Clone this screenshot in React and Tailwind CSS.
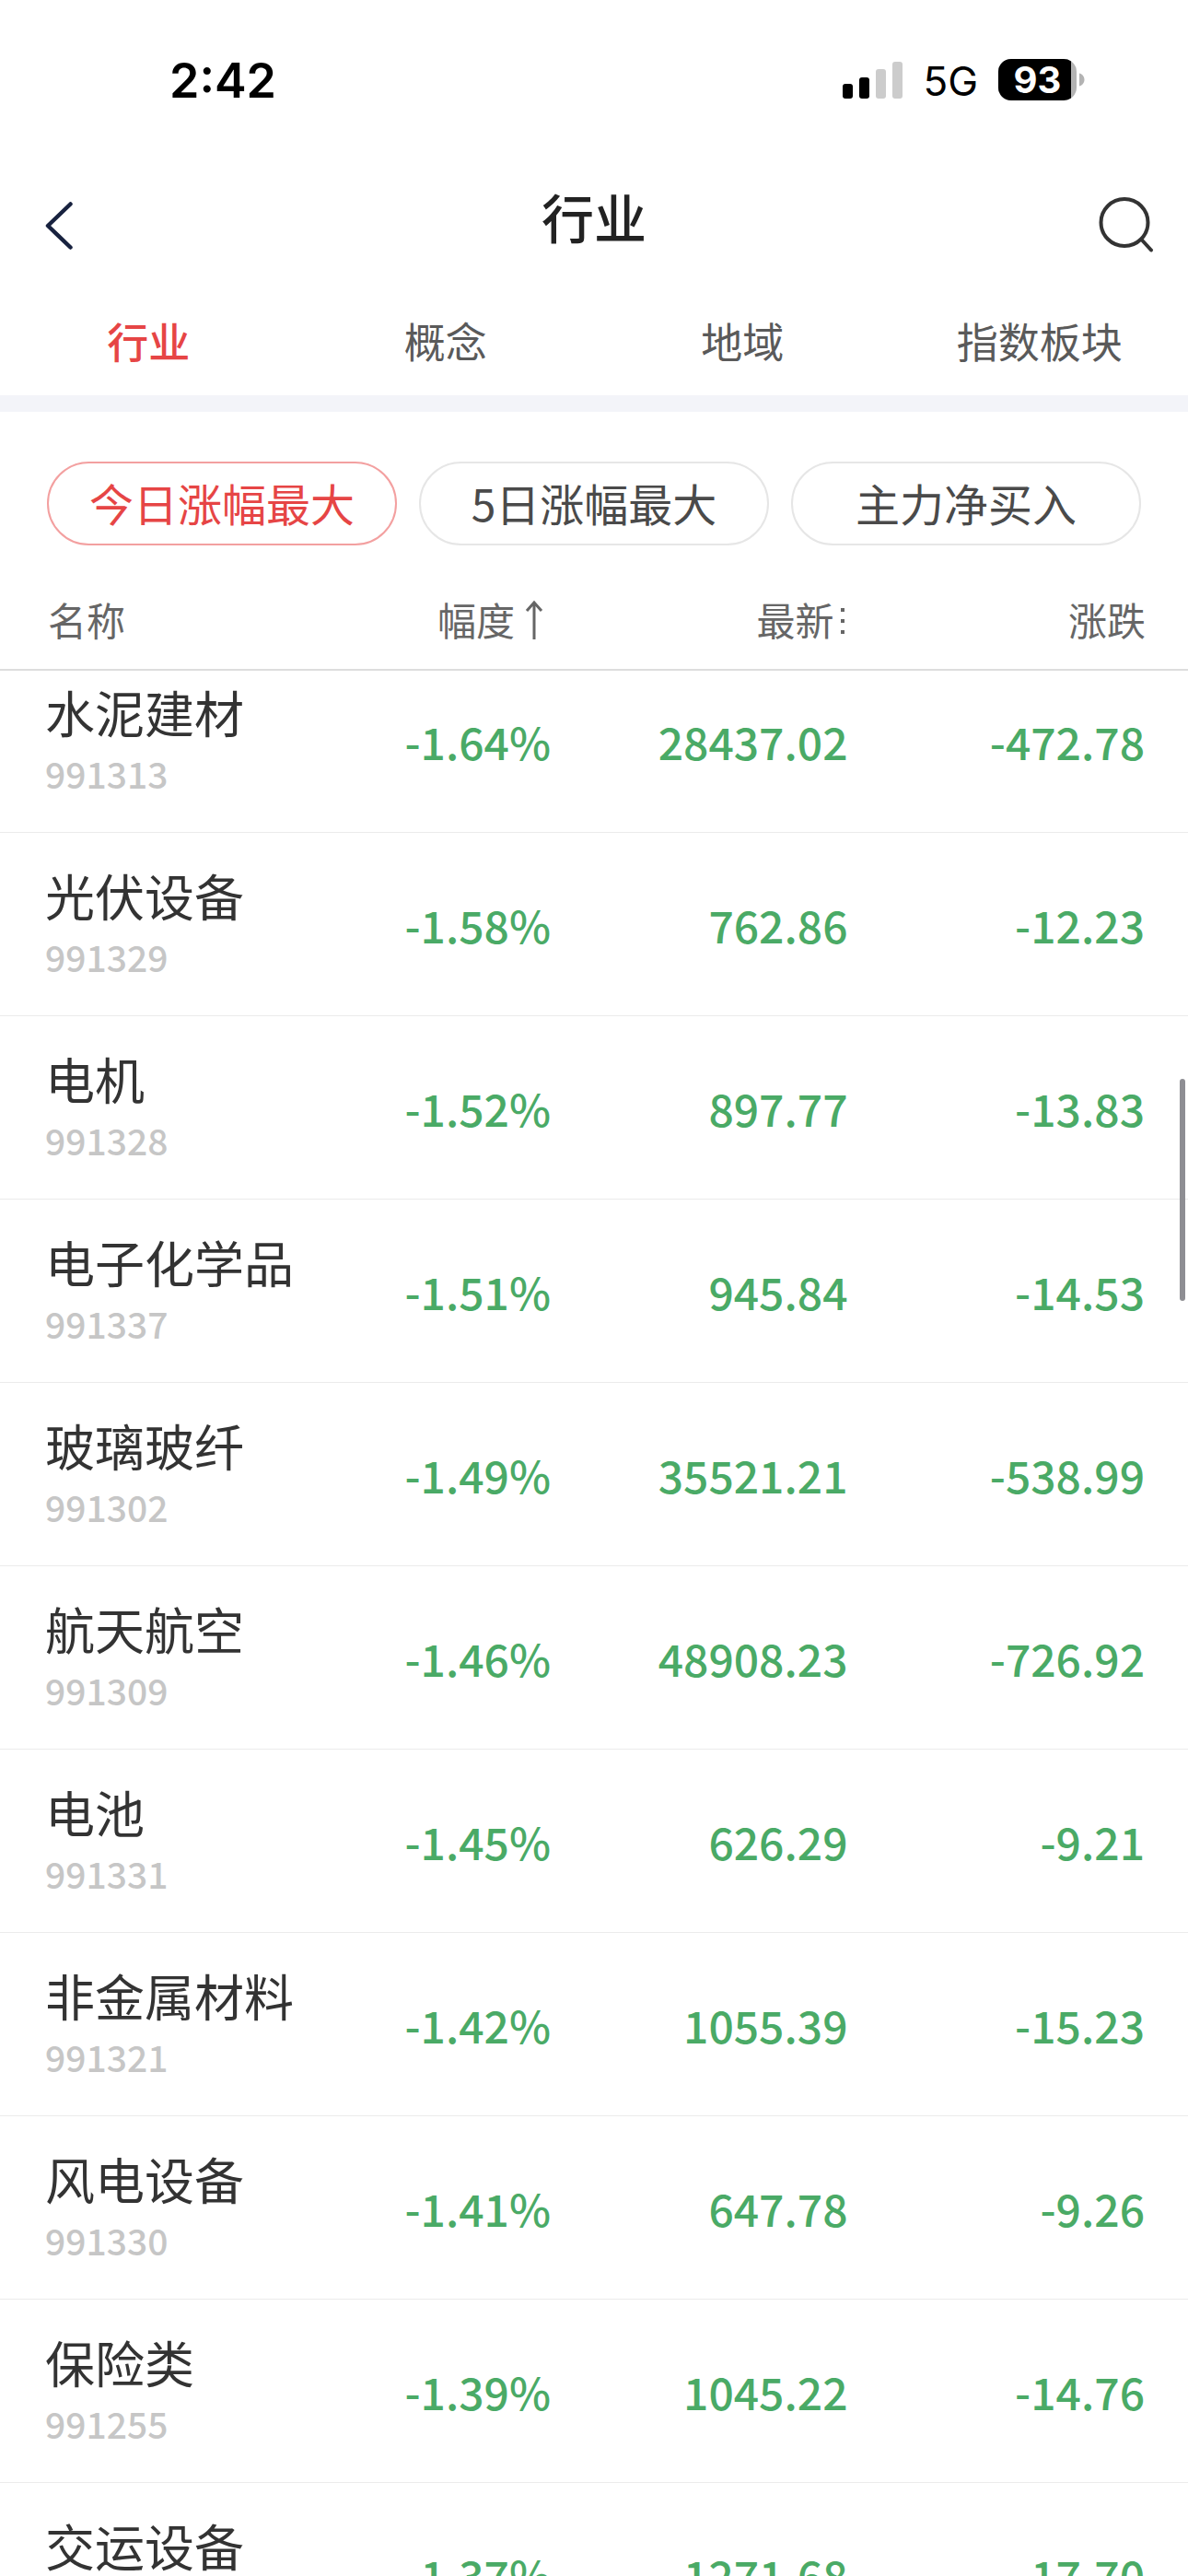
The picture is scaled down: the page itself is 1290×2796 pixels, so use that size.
import { useLayoutEffect, useRef, useState } from 'react';

const tabs = ['行业', '概念', '地域', '指数板块'];
const filters = ['今日涨幅最大', '5日涨幅最大', '主力净买入'];

const sectors = [
  { name: '水泥建材', code: '991313', percent: '-1.64%', price: '28437.02', change: '-472.78' },
  { name: '光伏设备', code: '991329', percent: '-1.58%', price: '762.86', change: '-12.23' },
  { name: '电机', code: '991328', percent: '-1.52%', price: '897.77', change: '-13.83' },
  { name: '电子化学品', code: '991337', percent: '-1.51%', price: '945.84', change: '-14.53' },
  { name: '玻璃玻纤', code: '991302', percent: '-1.49%', price: '35521.21', change: '-538.99' },
  { name: '航天航空', code: '991309', percent: '-1.46%', price: '48908.23', change: '-726.92' },
  { name: '电池', code: '991331', percent: '-1.45%', price: '626.29', change: '-9.21' },
  { name: '非金属材料', code: '991321', percent: '-1.42%', price: '1055.39', change: '-15.23' },
  { name: '风电设备', code: '991330', percent: '-1.41%', price: '647.78', change: '-9.26' },
  { name: '保险类', code: '991255', percent: '-1.39%', price: '1045.22', change: '-14.76' },
  { name: '交运设备', code: '991256', percent: '-1.37%', price: '1271.68', change: '-17.70' },
];

const StatusBar = () => (
  <div className="h-[176px] shrink-0 flex items-center justify-between pl-[184px] pr-[112px] font-['Inter',sans-serif] text-black">
    <span className="text-[52px] leading-none font-semibold">2:42</span>
    <div className="flex items-center">
      <svg width="65" height="42" viewBox="0 0 65 42" aria-hidden="true">
        <rect x="0" y="24" width="11" height="16" rx="3" fill="#000" />
        <rect x="18" y="17" width="11" height="23" rx="3" fill="#000" />
        <rect x="36" y="8" width="11" height="32" rx="3" fill="#ccc" />
        <rect x="54" y="0" width="11" height="40" rx="3" fill="#ccc" />
      </svg>
      <span className="ml-[22px] mr-[22px] text-[44px] leading-none">5G</span>
      <div className="relative w-[94px] h-[45px] mb-[3px] flex items-center">
        <svg className="absolute inset-0" width="94" height="45" viewBox="0 0 94 45" aria-hidden="true">
          <clipPath id="level">
            <rect width="79" height="45" />
          </clipPath>
          <rect width="85" height="45" rx="14" fill="#b3b3b3" />
          <rect width="85" height="45" rx="14" fill="#000" clipPath="url(#level)" />
          <path d="M88 15.5c3.500 1 5.500 4 5.500 7s-2 6-5.500 7z" fill="#b3b3b3" />
        </svg>
        <span className="relative w-[85px] text-center text-[40px] leading-none font-bold text-white">93</span>
      </div>
    </div>
  </div>
);

const NavBar = () => (
  <header className="h-[135px] shrink-0 flex items-center justify-between px-[36px]">
    <button type="button" aria-label="返回" className="w-[64px] h-[64px]">
      <svg width="64" height="64" viewBox="0 0 64 64" fill="none" stroke="#18223f" strokeWidth="4.500" strokeLinecap="round" strokeLinejoin="round">
        <path d="M40.500 9.500L16 33L40.500 56.500" />
      </svg>
    </button>
    <h1 className="pb-[20px] text-[57px] leading-[64px] font-medium text-[#222]">行业</h1>
    <button type="button" aria-label="搜索" className="w-[64px] h-[64px]">
      <svg width="64" height="64" viewBox="0 0 64 64" fill="none" stroke="#333" strokeWidth="4" strokeLinecap="round">
        <circle cx="31" cy="29.500" r="25.500" />
        <path d="M49.500 48L60 59.500" />
      </svg>
    </button>
  </header>
);

const SortArrow = () => (
  <svg width="38" height="48" viewBox="0 0 38 48" fill="none" stroke="#666" strokeWidth="3" aria-hidden="true">
    <path d="M19 47V7M11 16L19 7L27 16" />
  </svg>
);

const SortDots = () => (
  <svg width="14" height="48" viewBox="0 0 14 48" fill="#666" aria-hidden="true">
    <rect x="5" y="13" width="4" height="4" />
    <rect x="5" y="25" width="4" height="4" />
    <rect x="5" y="37" width="4" height="4" />
  </svg>
);

const columns = [
  { label: '幅度', icon: <SortArrow />, sort: 'ascending' },
  { label: '最新', icon: <SortDots /> },
  { label: '涨跌' },
];

const App = () => {
  const [activeTab, setActiveTab] = useState('行业');
  const [activeFilter, setActiveFilter] = useState('今日涨幅最大');
  const listRef = useRef(null);

  // 初始时列表已滚动一小段
  useLayoutEffect(() => {
    listRef.current.scrollTop = 23;
  }, []);

  return (
    <div className="h-screen flex flex-col overflow-hidden bg-white font-['Noto_Sans_CJK_SC',sans-serif]">
      <StatusBar />
      <NavBar />

      <nav className="h-[118px] shrink-0 grid grid-cols-4">
        {tabs.map((tab) => (
          <button
            key={tab}
            type="button"
            onClick={() => setActiveTab(tab)}
            className={
              tab === activeTab
                ? 'text-[45px] font-medium text-[#e64545]'
                : 'text-[45px] text-[#5a5a5a]'
            }
          >
            {tab}
          </button>
        ))}
      </nav>

      <div className="h-[18px] shrink-0 bg-[#f3f4f9]" />

      <div className="shrink-0 grid grid-cols-3 gap-[24px] px-[51px] pt-[54px] pb-[26px]">
        {filters.map((filter) => (
          <button
            key={filter}
            type="button"
            onClick={() => setActiveFilter(filter)}
            className={
              filter === activeFilter
                ? 'h-[91px] pb-[4px] rounded-full border-2 border-[#f3a0a0] text-[48px] leading-[64px] text-[#e64545]'
                : 'h-[91px] pb-[4px] rounded-full border-2 border-[#e6e6e6] text-[48px] leading-[64px] text-[#4a4a4a]'
            }
          >
            {filter}
          </button>
        ))}
      </div>

      <div className="relative flex-1 min-h-0">
        <div ref={listRef} className="h-full overflow-y-auto [scrollbar-width:none]">
          <table className="w-full table-fixed border-separate border-spacing-0">
            <thead>
              <tr className="text-[42px] text-[#666]">
                <th scope="col" className="sticky top-0 h-[110px] bg-white border-b-2 border-[#ddd] p-0 pl-[52px] pb-[2px] text-left font-normal">
                  名称
                </th>
                {columns.map((col) => (
                  <th
                    key={col.label}
                    scope="col"
                    aria-sort={col.sort}
                    className="sticky top-0 h-[110px] bg-white border-b-2 border-[#ddd] p-0 pr-[46px] pb-[2px] font-normal"
                  >
                    <button type="button" className="w-full flex items-center justify-end gap-[2px]">
                      {col.label}
                      {col.icon}
                    </button>
                  </th>
                ))}
              </tr>
            </thead>
            <tbody>
              {sectors.map((sector) => (
                <tr key={sector.code} className="text-right text-[48px] font-medium text-[#4aaa66]">
                  <td className="h-[199px] p-0 pl-[49px] pb-[4px] border-b border-[#ebebeb] text-left">
                    <div className="text-[54px] leading-[74px] whitespace-nowrap font-normal text-[#333]">{sector.name}</div>
                    <div className="text-[39px] leading-[58px] text-[#c6c6c6]">{sector.code}</div>
                  </td>
                  <td className="p-0 pr-[47px] border-b border-[#ebebeb]">{sector.percent}</td>
                  <td className="p-0 pr-[47px] border-b border-[#ebebeb]">{sector.price}</td>
                  <td className="p-0 pr-[47px] border-b border-[#ebebeb]">{sector.change}</td>
                </tr>
              ))}
            </tbody>
          </table>
        </div>
        <div className="absolute top-[553px] right-[3px] w-[6px] h-[241px] rounded-full bg-[#8e8e93]" />
      </div>
    </div>
  );
};

export default App;
